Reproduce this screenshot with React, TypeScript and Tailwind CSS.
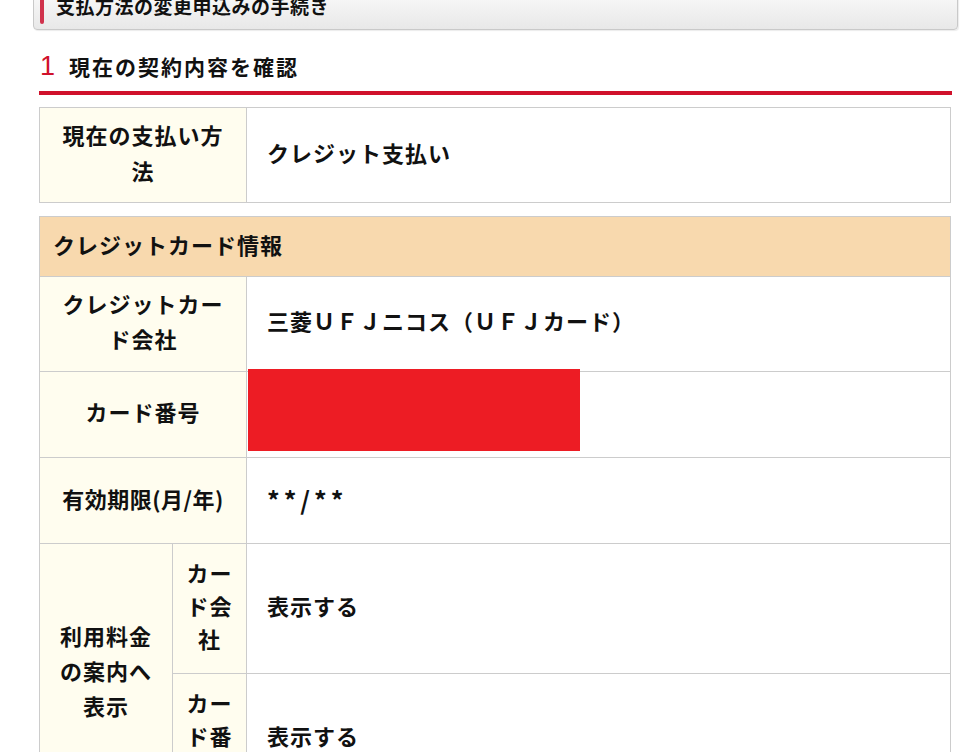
import React from "react";

const jp = { fontFamily: '"Noto Sans CJK JP", "Noto Sans", sans-serif' };

export default function App() {
  return (
    <div className="w-[975px] min-h-[752px] bg-white text-[#111] font-bold" style={jp}>
      {/* Top title box (scrolled partly off screen) */}
      <div className="ml-[33px] mt-[-20px] w-[925px] h-[50px] rounded-[4px] border border-[#c9c9c9] bg-gradient-to-b from-[#ffffff] to-[#e8e8e8] shadow-[1px_1px_1px_rgba(0,0,0,0.08)] flex items-center pl-[6px]">
        <div className="w-[4px] h-[38px] rounded-full bg-[#d0324c]" />
        <div className="ml-[12px] text-[19px] tracking-[0.5px] leading-none mt-[1px]">支払方法の変更申込みの手続き</div>
      </div>

      <div className="ml-[39px] w-[913px]">
        {/* Section heading */}
        <div className="mt-[21px] h-[31px] flex items-baseline">
          <span className="text-[27px] leading-[31px] font-normal text-[#d0112b] ml-[1px]" style={{ fontFamily: '"Liberation Sans", Arial, sans-serif' }}>1</span>
          <span className="ml-[14px] text-[21px] tracking-[2px] leading-[31px]">現在の契約内容を確認</span>
        </div>
        <div className="mt-[9px] h-[4px] w-[913px] bg-[#d0112b]" />

        {/* Table 1 */}
        <div className="mt-[12px] w-[912px] grid grid-cols-[206px_703px] gap-px p-px bg-[#cccccc] text-[22px] tracking-[1px]">
          <div className="h-[94px] bg-[#fffdef] flex items-center justify-center text-center px-[12px] pb-[7px] leading-[36px]">
            現在の支払い方法
          </div>
          <div className="h-[94px] bg-white flex items-center pl-[20px] pb-[5px]">クレジット支払い</div>
        </div>

        {/* Table 2 */}
        <div className="mt-[13px] w-[912px] grid grid-cols-[132px_73px_703px] grid-rows-[59px_94px_85px_85px_129px_129px] gap-px p-px bg-[#cccccc] text-[22px] tracking-[1px] leading-[35px]">
          <div className="col-span-3 bg-[#f8d9ae] flex items-center pl-[13px] pb-[5px]">クレジットカード情報</div>

          <div className="col-span-2 bg-[#fffdef] flex items-center justify-center text-center px-[12px] pb-[7px]">クレジットカード会社</div>
          <div className="bg-white flex items-center pl-[20px] pb-[7px]">三菱ＵＦＪニコス（ＵＦＪカード）</div>

          <div className="col-span-2 bg-[#fffdef] flex items-center justify-center text-center px-[12px] pb-[7px]">カード番号</div>
          <div className="relative bg-white">
            <div className="absolute left-[1px] top-[-3px] w-[332px] h-[82px] bg-[#ed1c24]" />
          </div>

          <div className="col-span-2 bg-[#fffdef] flex items-center justify-center text-center px-[8px] pb-[5px] tracking-[0.5px]">有効期限(月/年)</div>
          <div className="bg-white flex items-center pl-[20px] pb-[2px] text-[25px] tracking-[4px]">**/**</div>

          <div className="row-span-2 bg-[#fffdef] flex items-center justify-center text-center px-[12px] pb-[6px]">利用料金の案内へ表示</div>
          <div className="bg-[#fffdef] flex items-center justify-center text-center px-[12px] pb-[6px] leading-[33px]">カード会社</div>
          <div className="bg-white flex items-center pl-[20px] pb-[7px]">表示する</div>

          <div className="bg-[#fffdef] flex items-center justify-center text-center px-[12px] pb-[6px] leading-[33px]">カード番号</div>
          <div className="bg-white flex items-center pl-[20px] pb-[7px]">表示する</div>
        </div>
      </div>
    </div>
  );
}
